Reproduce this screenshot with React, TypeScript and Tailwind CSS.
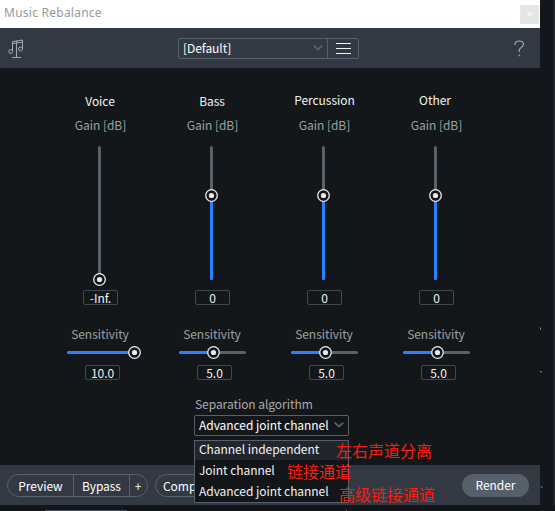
import { useState } from 'react';

const CHANNELS = [
  { name: 'Voice', gain: '-Inf.', gainTop: 133, sensitivity: '10.0', sensLeft: 67, shift: 'pt-px' },
  { name: 'Bass', gain: '0', gainTop: 49, sensitivity: '5.0', sensLeft: 34, shift: 'pt-px' },
  { name: 'Percussion', gain: '0', gainTop: 49, sensitivity: '5.0', sensLeft: 34, shift: 'pl-px' },
  { name: 'Other', gain: '0', gainTop: 49, sensitivity: '5.0', sensLeft: 34, shift: 'pr-[2px]' },
];

const ALGORITHMS = ['Channel independent', 'Joint channel', 'Advanced joint channel'];

export default function App() {
  const [algorithm, setAlgorithm] = useState('Advanced joint channel');

  return (
    <div className="relative flex h-[511px] w-[555px] flex-col overflow-hidden bg-[#131619] font-['Noto_Sans_CJK_SC','Noto_Sans',sans-serif] text-[12px] leading-4 tracking-[-0.05px] text-[#f2f3f4]">
      <div className="flex h-[505px]">
        <main className="flex w-[540px] flex-col">
          <TitleBar />
          <Toolbar />

          <section className="relative h-[397px] bg-[#131719] pt-6">
            <div className="flex pl-11">
              {CHANNELS.map((channel) => (
                <Channel key={channel.name} {...channel} />
              ))}
            </div>

            <div className="mt-[16px] ml-[194px] w-[155px]">
              <div className="pl-px text-[#a8abad]">Separation algorithm</div>
              <button className="mt-[3px] flex h-[21px] w-full items-center justify-between rounded-[2px] border border-[#56626b] pr-1 pb-px pl-1 text-white">
                <span className="whitespace-nowrap">{algorithm}</span>
                <Chevron />
              </button>
            </div>
          </section>

          <Footer />
        </main>
        <aside className="flex-1 border-r-2 border-[#20262b] bg-[#13161b]" />
      </div>
      <BottomEdge />

      {/* Algorithm menu */}
      <ul className="absolute top-[440px] left-[194px] h-[63px] w-[155px] border border-[#56626b] bg-[#131619]">
        {ALGORITHMS.map((item) => (
          <li
            key={item}
            onClick={() => setAlgorithm(item)}
            className="h-[21px] pl-1 leading-[18px] whitespace-nowrap first:mb-px first:h-[19px] first:bg-[#21252c] first:leading-[16px]"
          >
            {item}
          </li>
        ))}
      </ul>

      {/* Notes */}
      <Note className="top-[439px] left-[336px]">左右声道分离</Note>
      <Note className="top-[460px] left-[287px]">链接通道</Note>
      <Note className="top-[483px] left-[339px]">高级链接通道</Note>

      {/* Marks at the right edge */}
      <svg className="absolute top-[315px] left-[538px]" width="6" height="175" fill="none" stroke="#8b9197">
        <path d="M2.5 12.5v2" />
        <path d="M2 56l2 1.5" />
        <path d="M2.5 171l2 2" />
      </svg>
    </div>
  );
}

function TitleBar() {
  return (
    <div className="flex h-7 items-start justify-between bg-white pr-px pl-1 text-[#999]">
      <span className="mt-[5px] font-['Noto_Sans','Open_Sans',sans-serif] text-[12px] tracking-[0.25px]">Music Rebalance</span>
      <button className="mt-[5px] flex h-[19px] w-[19px] items-center justify-center bg-[#e5e5e5]">
        <svg width="5" height="5" stroke="#fafafa" strokeWidth="1.4">
          <path d="M.5.5l4 4M4.5.5l-4 4" />
        </svg>
      </button>
    </div>
  );
}

function Toolbar() {
  return (
    <div className="flex h-10 items-center bg-[#323943] text-white">
      <svg className="ml-2" width="16" height="19" fill="none" stroke="#a2a8ae">
        <path d="M4.5 12V2.5L14.5 1v9M4.5 4.5l10-1.5M8.5 2v16M4 18.5h9" />
        <circle cx="2.7" cy="12.5" r="1.9" />
        <circle cx="12.5" cy="10" r="2" />
      </svg>
      <div className="ml-[154px] flex h-[21px] w-[181px] rounded-[2px] border border-[#56626b]">
        <button className="flex flex-1 items-center justify-between pr-1 pl-1">
          <span>[Default]</span>
          <Chevron />
        </button>
        <button className="flex w-[31px] items-center justify-center border-l border-[#56626b]">
          <svg width="15" height="11" stroke="#f2f2f2">
            <path d="M0 .5h15M0 5.5h15M0 10.5h15" />
          </svg>
        </button>
      </div>
      <svg className="ml-[155px]" width="11" height="17" fill="none" stroke="#a2a8ae" strokeWidth="1.2">
        <path d="M1 5V4Q1 1 5.2 1T9.5 4.2Q9.5 6.2 7.3 7.6T5.2 10.5V12" />
        <path d="M5.2 14.5v1.8" />
      </svg>
    </div>
  );
}

function Channel({
  name,
  gain,
  gainTop,
  sensitivity,
  sensLeft,
  shift,
}: {
  name: string;
  gain: string;
  gainTop: number;
  sensitivity: string;
  sensLeft: number;
  shift: string;
}) {
  return (
    <div className="flex w-28 flex-col items-center">
      <div className={`h-[17px] ${shift}`}>{name}</div>
      <div className="mt-2 ml-px text-[#9da1a3]">Gain [dB]</div>

      <div className="relative mt-[13px] mr-px h-[134px] w-[3px] rounded-full bg-[#56616a]">
        <div className="absolute inset-x-0 bottom-0 rounded-full bg-[#2684ff]" style={{ top: gainTop }} />
        <Thumb x={1.5} y={gainTop + 0.5} />
      </div>

      <ValueBox className="mt-[10px] ml-px">{gain}</ValueBox>
      <div className="mt-[21px] text-[#9da1a3]">Sensitivity</div>

      <div className="relative mt-[9px] ml-px h-[3px] w-[67px] rounded-full bg-[#56616a]">
        <div className="absolute inset-y-0 left-0 rounded-full bg-[#2684ff]" style={{ width: sensLeft }} />
        <Thumb x={sensLeft + 0.5} y={1.5} />
      </div>

      <ValueBox className="mt-[11px] ml-[5px]">{sensitivity}</ValueBox>
    </div>
  );
}

function Footer() {
  return (
    <div className="flex h-10 items-center bg-[#323943] text-white">
      <div className="ml-[7px] flex h-[23px] w-[141px] rounded-full border border-[#56626b] leading-[21px]">
        <button className="w-[66px] border-r border-[#56626b]">Preview</button>
        <button className="w-14 border-r border-[#56626b]">Bypass</button>
        <button className="flex-1 pr-px">+</button>
      </div>
      <button className="ml-[7px] h-[23px] w-[75px] rounded-full border border-[#56626b] pl-[7px] text-left leading-[21px]">
        Comp
      </button>
      <button className="ml-[232px] h-[23px] w-[67px] rounded-full bg-[#56606a]">Render</button>
    </div>
  );
}

function BottomEdge() {
  return (
    <div className="flex h-[6px] items-end bg-[#131619] pl-[45px]">
      <div className="h-px w-[82px] bg-[#414a54]" />
      <div className="ml-[219px] h-px w-px bg-[#56626b]" />
    </div>
  );
}

/* ---------------- Atoms ---------------- */

function Thumb({ x, y }: { x: number; y: number }) {
  return (
    <svg className="absolute -mt-[7.5px] -ml-[7.5px] max-w-none" style={{ left: x, top: y }} width="15" height="15">
      <circle cx="7.5" cy="7.5" r="5.8" fill="#131719" stroke="#ececec" strokeWidth="1.3" />
      <circle cx="7.5" cy="7.5" r="2.6" fill="#ececec" />
    </svg>
  );
}

function ValueBox({ children, className }: { children: React.ReactNode; className: string }) {
  return (
    <div
      className={`h-[15px] w-[35px] rounded-[2px] border border-[#414950] text-center leading-[13px] ${className}`}
    >
      {children}
    </div>
  );
}

function Chevron() {
  return (
    <svg width="10" height="6" fill="none" stroke="#56626b" strokeWidth="1.8">
      <path d="M.7.7L5 4.5 9.3.7" />
    </svg>
  );
}

function Note({ children, className }: { children: string; className: string }) {
  return (
    <span className={`absolute text-[16px] leading-[22px] tracking-normal whitespace-nowrap text-[#fb1b10] ${className}`}>
      {children}
    </span>
  );
}
